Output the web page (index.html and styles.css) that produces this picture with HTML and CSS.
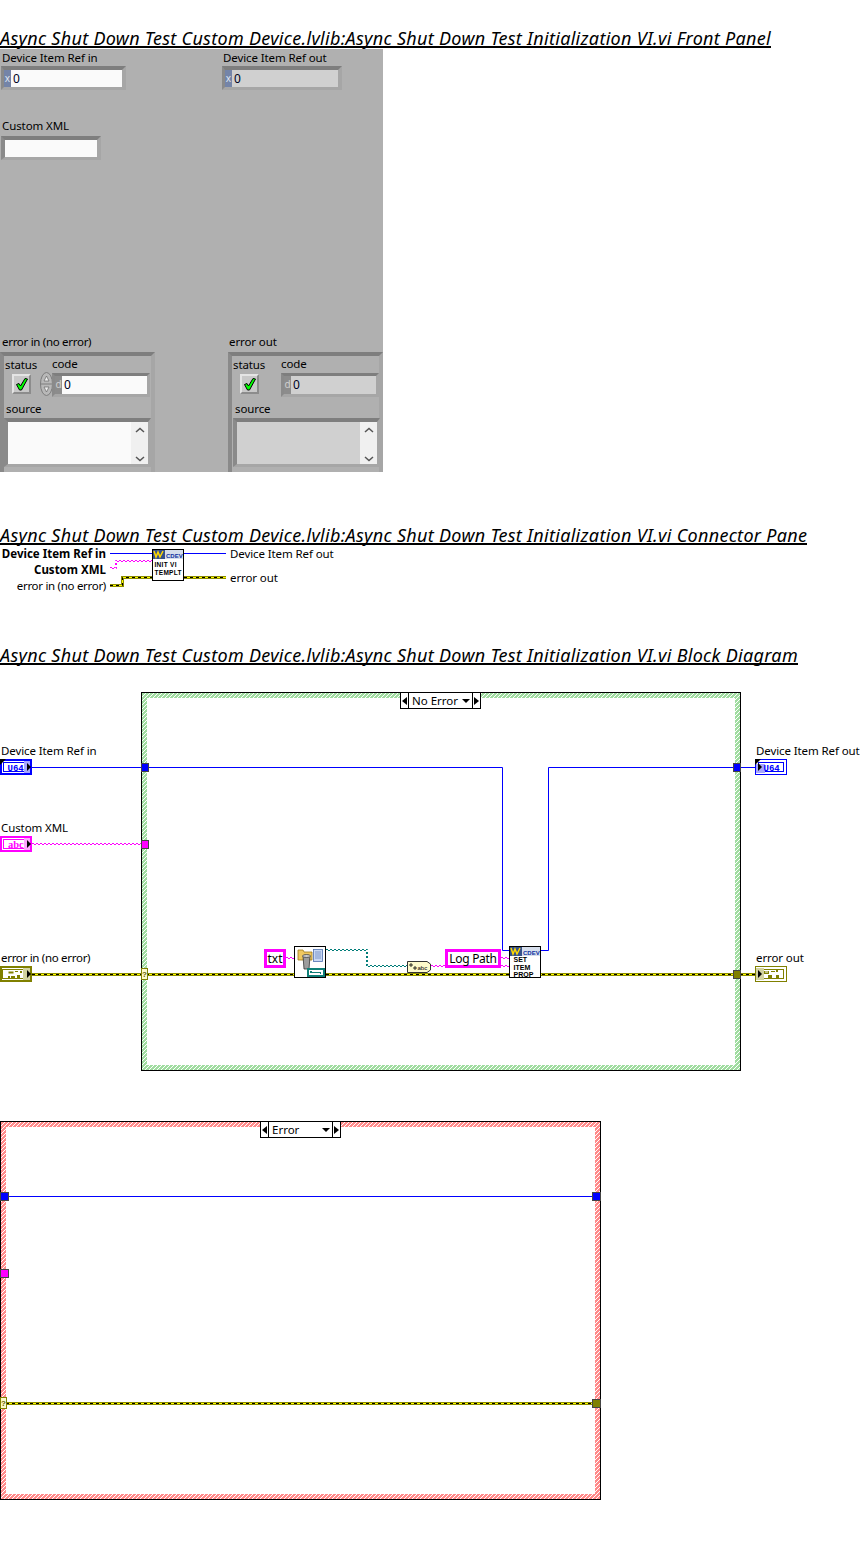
FILE: index.html
```html
<!DOCTYPE html>
<html lang="en">
<head>
<meta charset="utf-8">
<title>Async Shut Down Test Initialization VI</title>
<link rel="stylesheet" href="styles.css">
</head>
<body>
<section class="sec sec-panel">
  <h2 class="title">Async Shut Down Test Custom Device.lvlib:Async Shut Down Test Initialization VI.vi Front Panel</h2>
  <div class="panel">
    <span class="lbl fp-l1">Device Item Ref in</span>
    <div class="num fp-n1"><span class="radix">x</span><span class="val">0</span></div>
    <span class="lbl fp-l2">Device Item Ref out</span>
    <div class="num ind fp-n2"><span class="radix">x</span><span class="val">0</span></div>
    <span class="lbl fp-l3">Custom XML</span>
    <div class="num fp-n3"><span class="val"></span></div>

    <span class="lbl tight fp-l4">error in (no error)</span>
    <div class="cluster fp-c1"></div>
    <span class="lbl fp-s1">status</span>
    <span class="lbl fp-k1">code</span>
    <div class="okbtn fp-b1"><svg class="fill" viewBox="0 0 15 16"><path d="M2.500 8.500L5 7.500 6.500 10 11 2.500 13.500 3 7.500 14H5.500z" fill="#0f0" stroke="#000" stroke-width="1" stroke-linejoin="round"/></svg></div>
    <svg class="spin fp-sp" viewBox="0 0 13 24"><ellipse cx="6.500" cy="12" rx="6" ry="11.500" fill="#b8b8b8" stroke="#7c7c7c"/><path d="M1 12h11" stroke="#7c7c7c"/><path d="M4 9l2.500-5 2.500 5zM4 15l2.500 5 2.500-5z" fill="#eee" stroke="#666" stroke-width=".7"/></svg>
    <div class="num fp-n4"><span class="radix dark">d</span><span class="val">0</span></div>
    <span class="lbl fp-r1">source</span>
    <div class="num src fp-t1"><span class="val"></span><span class="sbar"><svg class="chev" viewBox="0 0 10 6"><path d="M1 5l4-3.500L9 5" fill="none" stroke="#555" stroke-width="1.500"/></svg><svg class="chev" viewBox="0 0 10 6"><path d="M1 1l4 3.500L9 1" fill="none" stroke="#555" stroke-width="1.500"/></svg></span></div>

    <span class="lbl fp-l5">error out</span>
    <div class="cluster fp-c2"></div>
    <span class="lbl fp-s2">status</span>
    <span class="lbl fp-k2">code</span>
    <div class="okbtn fp-b2"><svg class="fill" viewBox="0 0 15 16"><path d="M2.500 8.500L5 7.500 6.500 10 11 2.500 13.500 3 7.500 14H5.500z" fill="#0f0" stroke="#000" stroke-width="1" stroke-linejoin="round"/></svg></div>
    <div class="num ind fp-n5"><span class="radix dark">d</span><span class="val">0</span></div>
    <span class="lbl fp-r2">source</span>
    <div class="num ind src fp-t2"><span class="val"></span><span class="sbar"><svg class="chev" viewBox="0 0 10 6"><path d="M1 5l4-3.500L9 5" fill="none" stroke="#555" stroke-width="1.500"/></svg><svg class="chev" viewBox="0 0 10 6"><path d="M1 1l4 3.500L9 1" fill="none" stroke="#555" stroke-width="1.500"/></svg></span></div>
  </div>
</section>

<section class="sec sec-conn">
  <h2 class="title">Async Shut Down Test Custom Device.lvlib:Async Shut Down Test Initialization VI.vi Connector Pane</h2>
  <div class="conn">
    <span class="lbl right bold cp-1">Device Item Ref in</span>
    <span class="lbl right bold cp-2">Custom XML</span>
    <span class="lbl right tight cp-3">error in (no error)</span>
    <span class="lbl cp-4">Device Item Ref out</span>
    <span class="lbl cp-5">error out</span>
    <svg class="overlay" viewBox="0 545 350 50">
      <path d="M110 553.500H152M184 553.500H226" class="w-blue"/>
      <path d="M110 567.500H115.500V560.500H152" class="w-pink"/>
      <path d="M110 568.500H116.500V561.500H152" class="w-pink2"/>
      <path d="M110 585.500H122.500V577.500H152M184 577.500H226" class="w-err"/>
      <path d="M110 585.500H122.500V577.500H152M184 577.500H226" class="w-err3"/>
      <path d="M110 585.500H122.500V577.500H152M184 577.500H226" class="w-err2"/>
      <rect x="152.500" y="549.500" width="31" height="31" fill="#fff" stroke="#000"/>
      <rect x="153" y="550" width="30" height="9" fill="#d6deec"/>
      <rect x="153" y="550" width="12" height="9" fill="#34508c"/>
      <path d="M154 551l2 6 2-5 2 5 3-6" fill="none" stroke="#ffd800" stroke-width="1.500"/>
      <text x="166" y="557.500" class="ico-h">CDEV</text>
      <text x="154.500" y="566.500" class="ico-t">INIT VI</text>
      <text x="154.500" y="575" class="ico-t">TEMPLT</text>
    </svg>
  </div>
</section>

<section class="sec sec-block">
  <h2 class="title">Async Shut Down Test Custom Device.lvlib:Async Shut Down Test Initialization VI.vi Block Diagram</h2>
  <div class="block">
    <div class="frame green fr-1"><div class="frame-in"></div></div>
    <div class="frame red fr-2"><div class="frame-in"></div></div>

    <svg class="overlay" viewBox="0 680 861 830">
      <defs>
        <g id="chk"><path d="M0 0l4 4-4 4z" fill="#000"/></g>
      </defs>
      <!-- wires: no error case -->
      <path d="M32 767.500H502.500V950.500H509M541 950.500H548.500V767.500H755" class="w-blue"/>
      <path d="M32 843.500H141M286 957.500H294M431 965.500H445M501 957.500H509M501 965.500H509" class="w-pink"/>
      <path d="M32 844.500H141M286 958.500H294M431 966.500H445M501 958.500H509M501 966.500H509" class="w-pink2"/>
      <path d="M326 949.500H367.500V965.500H407" class="w-teal"/>
      <path d="M326 950.500H366.500V966.500H407" class="w-teal2"/>
      <path d="M32 974.500H755" class="w-err"/>
      <path d="M32 974.500H755" class="w-err3"/>
      <path d="M32 974.500H755" class="w-err2"/>
      <!-- wires: error case -->
      <path d="M6 1196.500H595" class="w-blue"/>
      <path d="M6 1403.500H595" class="w-err"/>
      <path d="M6 1403.500H595" class="w-err3"/>
      <path d="M6 1403.500H595" class="w-err2"/>

      <!-- tunnels -->
      <rect x="141.500" y="763.500" width="7" height="8" class="t-blue"/>
      <rect x="733.500" y="763.500" width="7" height="8" class="t-blue"/>
      <rect x="141.500" y="840.500" width="7" height="8" class="t-pink"/>
      <rect x="733.500" y="970.500" width="7" height="8" class="t-olive"/>
      <rect x="141.500" y="968.500" width="6" height="11" class="t-sel"/>
      <text x="144.500" y="977" class="q">?</text>
      <rect x="0.500" y="1192.500" width="8" height="8" class="t-blue"/>
      <rect x="592.500" y="1192.500" width="8" height="8" class="t-blue"/>
      <rect x="0.500" y="1269.500" width="8" height="8" class="t-pink"/>
      <rect x="592.500" y="1399.500" width="8" height="8" class="t-olive"/>
      <rect x="0.500" y="1397.500" width="6" height="11" class="t-sel"/>
      <text x="3.500" y="1406" class="q">?</text>

      <!-- U64 control -->
      <rect x="1" y="760" width="30" height="14" fill="#fff" stroke="#00f" stroke-width="2"/>
      <rect x="3.500" y="762.500" width="24" height="9" fill="#fff" stroke="#00f"/>
      <rect x="24" y="761" width="6" height="12" fill="#a6a6ff"/>
      <text x="7.500" y="770.500" class="term blue">U64</text>
      <use href="#chk" x="27" y="763"/>
      <path d="M0 759h6l-6 6z" fill="#000"/>
      <!-- U64 indicator -->
      <rect x="755.500" y="759.500" width="31" height="15" fill="#fff" stroke="#00f"/>
      <rect x="758.500" y="762.500" width="25" height="9" fill="#fff" stroke="#00f"/>
      <rect x="756" y="764" width="9" height="9" fill="#a6a6ff"/>
      <path d="M755 759h6l-6 6z" fill="#000"/>
      <use href="#chk" x="758" y="763"/>
      <text x="763.500" y="770.500" class="term blue">U64</text>

      <!-- string control -->
      <rect x="1" y="837" width="30" height="14" fill="#fff" stroke="#f0f" stroke-width="2"/>
      <rect x="3.500" y="839.500" width="24" height="9" fill="#fff" stroke="#f0f"/>
      <rect x="24" y="838" width="6" height="12" fill="#ffa6ff"/>
      <text x="8" y="847.500" class="term serif pink">abc</text>
      <use href="#chk" x="27" y="840"/>

      <!-- error control -->
      <rect x="1" y="967" width="30" height="14" fill="#fff" stroke="#808000" stroke-width="2"/>
      <rect x="2.500" y="969.500" width="25" height="9" fill="#fff" stroke="#808000"/>
      <rect x="23" y="968" width="7" height="12" fill="#d2d2a0"/>
      <use href="#chk" x="27" y="970"/>
      <path d="M8.500 971.500h5v2h-5zM11 976h4v2h-4z" fill="#808000"/>
      <path d="M15 971h3v1h-3zM8 976h2v2H8zM17 975h3v3h-3zM20 971h2v2h-2z" fill="#808000"/>
      <!-- error indicator -->
      <rect x="755.500" y="966.500" width="31" height="15" fill="#fff" stroke="#808000"/>
      <rect x="758.500" y="969.500" width="25" height="9" fill="#fff" stroke="#808000"/>
      <rect x="756" y="968" width="8" height="12" fill="#d2d2a0"/>
      <use href="#chk" x="758" y="970"/>
      <path d="M764 971h5v3h-5zM771 971h4v1h-4zM776 970h2v2h-2zM768 975h4v3h-4zM776 975h3v3h-3z" fill="#808000"/>
      <rect x="765" y="971.500" width="3" height="1" fill="#fff"/>

      <!-- file dialog / temp node -->
      <rect x="294.500" y="946.500" width="31" height="31" fill="#fff" stroke="#000"/>
      <path d="M298 950h5l1 2h8v8h-14z" fill="#f0c860" stroke="#a07818" stroke-width=".8"/>
      <rect x="313.500" y="949.500" width="9" height="12" fill="#c8d8f4" stroke="#5070b0" stroke-width=".8"/>
      <path d="M315 952h6M315 954h6M315 956h6M315 958h6" stroke="#5070b0" stroke-width=".6"/>
      <path d="M303 956h7l-1 13h-5z" fill="#9c9c9c" stroke="#333" stroke-width=".8"/>
      <ellipse cx="306.500" cy="956" rx="4" ry="1.500" fill="#ccc" stroke="#333" stroke-width=".7"/>
      <rect x="307" y="968" width="18" height="9" fill="#0f7f78"/>
      <rect x="309" y="970" width="14" height="5" fill="#fff"/>
      <path d="M310 971h2v2h-2zM312 972h9v2h-1v-1h-8z" fill="#0f7f78"/>

      <!-- path to string -->
      <path d="M407.500 961.500H427L430.500 964V970L427 972.500H407.500z" fill="#fdfacb" stroke="#333"/>
      <path d="M410 964h2v2h-2zM414 967h2v2h-2z" fill="none" stroke="#000" stroke-width=".8"/>
      <text x="417.500" y="969.500" class="tiny">abc</text>

      <!-- set item prop -->
      <rect x="509.500" y="946.500" width="31" height="31" fill="#fff" stroke="#000"/>
      <rect x="510" y="947" width="30" height="9" fill="#d6deec"/>
      <rect x="510" y="947" width="12" height="9" fill="#34508c"/>
      <path d="M511 948l2 6 2-5 2 5 3-6" fill="none" stroke="#ffd800" stroke-width="1.500"/>
      <text x="523" y="954.500" class="ico-h">CDEV</text>
      <text x="513.500" y="961.500" class="ico-b">SET</text>
      <text x="513.500" y="969.500" class="ico-b">ITEM</text>
      <text x="513.500" y="977" class="ico-b">PROP</text>
    </svg>

    <span class="lbl bd-1">Device Item Ref in</span>
    <span class="lbl bd-2">Custom XML</span>
    <span class="lbl tight bd-3">error in (no error)</span>
    <span class="lbl bd-4">Device Item Ref out</span>
    <span class="lbl bd-5">error out</span>

    <div class="selector sel-1">
      <span class="step"><i class="tri left"></i></span>
      <span class="case">No Error<i class="tri down"></i></span>
      <span class="step"><i class="tri right"></i></span>
    </div>
    <div class="selector sel-2">
      <span class="step"><i class="tri left"></i></span>
      <span class="case">Error<i class="tri down"></i></span>
      <span class="step"><i class="tri right"></i></span>
    </div>

    <span class="const c-txt">txt</span>
    <span class="const c-log">Log Path</span>
  </div>
</section>
</body>
</html>
```

FILE: styles.css
```css
* { box-sizing: border-box; }
html, body { margin: 0; padding: 0; background: #fff; }
body {
  width: 861px;
  height: 1550px;
  overflow: hidden;
  font-family: "Noto Sans", "Open Sans", sans-serif;
  color: #000;
}
.sec { display: flow-root; }
.sec-panel { padding-top: 25px; height: 522px; }
.sec-conn { height: 120px; }
.title {
  width: fit-content;
  margin: 0 0 1px;
  height: 23px;
  line-height: 27px;
  border-bottom: 2px solid #000;
  font-size: 18px;
  letter-spacing: .3px;
  font-weight: 400;
  font-style: italic;
  white-space: nowrap;
}
.sec-conn .title { margin-bottom: 0; }

/* canvases */
.panel { position: relative; width: 383px; height: 423px; background: #b0b0b0; }
.conn { position: relative; height: 50px; }
.block { position: relative; height: 830px; margin-top: 15px; }
.overlay { position: absolute; left: 0; top: 0; width: 100%; height: 100%; display: block; }
.conn .overlay { width: 350px; }
.block .overlay { width: 861px; }

.lbl {
  position: absolute;
  font-size: 11.5px;
  letter-spacing: -.1px;
  line-height: 14px;
  white-space: nowrap;
}
.lbl.tight { letter-spacing: -.3px; }
.lbl.bold { font-weight: 700; letter-spacing: 0; }
.right { text-align: right; left: 0; width: 106px; }

/* front panel, coordinates relative to panel */
.fp-l1 { left: 2px; top: 2px; }
.fp-l2 { left: 223px; top: 2px; }
.fp-l3 { left: 2px; top: 70px; }
.fp-l4 { left: 2px; top: 286px; }
.fp-l5 { left: 229px; top: 286px; }
.fp-s1 { left: 5px; top: 309px; }
.fp-k1 { left: 52px; top: 308px; }
.fp-r1 { left: 6px; top: 353px; }
.fp-s2 { left: 233px; top: 309px; }
.fp-k2 { left: 281px; top: 308px; }
.fp-r2 { left: 235px; top: 353px; }

.num {
  position: absolute;
  display: flex;
  border-style: solid;
  border-width: 4px 4px 3px 3px;
  border-color: #7e7e7e #a6a6a6 #a6a6a6 #8a8a8a;
  font-size: 12px;
  line-height: 17px;
}
.val { flex: 1; background: #fafafa; padding-left: 2px; color: #002; }
.ind .val { background: #d0d0d0; }
.radix { width: 7px; background: #7484a8; color: #dfe4f0; font-size: 10px; text-align: center; }
.radix.dark { background: #8c8c8c; color: #d0d0d0; }
.fp-n1 { left: 1px; top: 17px; width: 125px; height: 24px; }
.fp-n2 { left: 222px; top: 17px; width: 120px; height: 24px; }
.fp-n3 { left: 1px; top: 87px; width: 100px; height: 24px; border-left-width: 4px; }
.fp-n4 { left: 52px; top: 324px; width: 98px; height: 24px; border-width: 3px; }
.fp-n5 { left: 281px; top: 324px; width: 98px; height: 24px; border-width: 3px; }
.src { border-width: 4px 3px 3px 4px; }
.fp-t1 { left: 4px; top: 369px; width: 147px; height: 49px; }
.fp-t2 { left: 233px; top: 369px; width: 147px; height: 49px; }
.sbar {
  width: 17px;
  background: #f0f0f0;
  display: flex;
  flex-direction: column;
  justify-content: space-between;
  align-items: center;
  padding: 5px 0 2px;
}
.chev { width: 10px; height: 6px; display: block; }

.cluster {
  position: absolute;
  width: 155px;
  height: 120px;
  border-style: solid;
  border-width: 4px 4px 0 4px;
  border-color: #7e7e7e #a6a6a6 #a6a6a6 #8a8a8a;
  background: #b0b0b0;
}
.fp-c1 { left: 0; top: 303px; }
.fp-c2 { left: 228px; top: 303px; }

.okbtn {
  position: absolute;
  width: 19px;
  height: 20px;
  background: #c8c8c8;
  border-style: solid;
  border-width: 2px;
  border-color: #e4e4e4 #8c8c8c #8c8c8c #e4e4e4;
}
.fill { display: block; width: 100%; height: 100%; overflow: visible; }
.fp-b1 { left: 12px; top: 325px; }
.fp-b2 { left: 240px; top: 325px; }
.spin { position: absolute; left: 40px; top: 323px; width: 13px; height: 24px; }

/* connector pane labels, relative to y=545 */
.cp-1 { top: 2px; }
.cp-2 { top: 18px; }
.cp-3 { top: 34px; }
.cp-4 { left: 230px; top: 2px; }
.cp-5 { left: 230px; top: 26px; }

/* block diagram, relative to y=680 */
.frame {
  position: absolute;
  border: 1px solid #000;
  padding: 5px;
  background-size: 4px 4px;
}
.frame.green { background-image: linear-gradient(135deg, #a0dca0 0 37.5%, #fff 37.5% 50%, #a0dca0 50% 87.5%, #fff 87.5%); }
.frame.red { background-image: linear-gradient(135deg, #ff8a8a 0 37.5%, #fff 37.5% 50%, #ff8a8a 50% 87.5%, #fff 87.5%); }
.frame-in { width: 100%; height: 100%; background: #fff; }
.fr-1 { left: 141px; top: 12px; width: 600px; height: 379px; }
.fr-2 { left: 0; top: 441px; width: 601px; height: 379px; }

.bd-1 { left: 1px; top: 64px; }
.bd-2 { left: 1px; top: 141px; }
.bd-3 { left: 1px; top: 271px; }
.bd-4 { left: 756px; top: 64px; }
.bd-5 { left: 756px; top: 271px; }

.selector {
  position: absolute;
  display: flex;
  height: 17px;
  width: 81px;
  background: #fff;
  border: 1px solid #000;
  font-size: 11.5px;
  line-height: 15px;
  white-space: nowrap;
}
.sel-1 { left: 400px; top: 12px; }
.sel-2 { left: 260px; top: 441px; }
.step { width: 7px; display: flex; align-items: center; justify-content: center; flex: none; }
.case {
  flex: 1;
  display: flex;
  align-items: center;
  justify-content: space-between;
  padding: 0 2px 0 3px;
  border-left: 1px solid #000;
  border-right: 1px solid #000;
}
.tri { display: block; width: 0; height: 0; border-style: solid; border-color: transparent; }
.tri.left { border-width: 4px 5px 4px 0; border-right-color: #000; }
.tri.right { border-width: 4px 0 4px 5px; border-left-color: #000; }
.tri.down { border-width: 4px 4px 0 4px; border-top-color: #000; }

.const {
  position: absolute;
  background: #fff;
  border: 3px solid #f0f;
  text-align: center;
  white-space: nowrap;
  font-size: 12px;
  line-height: 13px;
  height: 19px;
}
.c-txt { left: 264px; top: 269px; width: 22px; }
.c-log { left: 445px; top: 269px; width: 56px; letter-spacing: -.3px; }

/* wires */
.w-blue { fill: none; stroke: #00f; stroke-width: 1; }
.w-pink { fill: none; stroke: #f0f; stroke-width: 1; stroke-dasharray: 2 2; }
.w-pink2 { fill: none; stroke: #f0f; stroke-width: 1; stroke-dasharray: 2 2; stroke-dashoffset: 2; }
.w-teal { fill: none; stroke: #007c78; stroke-width: 1; stroke-dasharray: 2 2; }
.w-teal2 { fill: none; stroke: #007c78; stroke-width: 1; stroke-dasharray: 2 2; stroke-dashoffset: 2; }
.w-err { fill: none; stroke: #8a8a00; stroke-width: 3; }
.w-err3 { fill: none; stroke: #ffff00; stroke-width: 1; }
.w-err2 { fill: none; stroke: #000; stroke-width: 1; stroke-dasharray: 3 3; }

.t-blue { fill: #00f; stroke: #444; }
.t-pink { fill: #f0f; stroke: #444; }
.t-olive { fill: #808000; stroke: #444; }
.t-sel { fill: #fdfacb; stroke: #808000; }
.q { font: 700 8px "Liberation Sans", sans-serif; fill: #606000; text-anchor: middle; }

.ico-t { font: 700 6.500px "Liberation Sans", sans-serif; fill: #000; letter-spacing: .3px; }
.ico-b { font: 700 7px "Liberation Sans", sans-serif; fill: #000; }
.ico-h { font: 700 6px "Liberation Sans", sans-serif; fill: #1030a0; }
.term { font: 700 9px "Liberation Mono", monospace; }
.term.serif { font-family: "Liberation Serif", serif; font-size: 10.500px; }
.term.blue { fill: #00f; }
.term.pink { fill: #f0f; }
.tiny { font: 400 6px "Liberation Sans", sans-serif; fill: #000; }
```
